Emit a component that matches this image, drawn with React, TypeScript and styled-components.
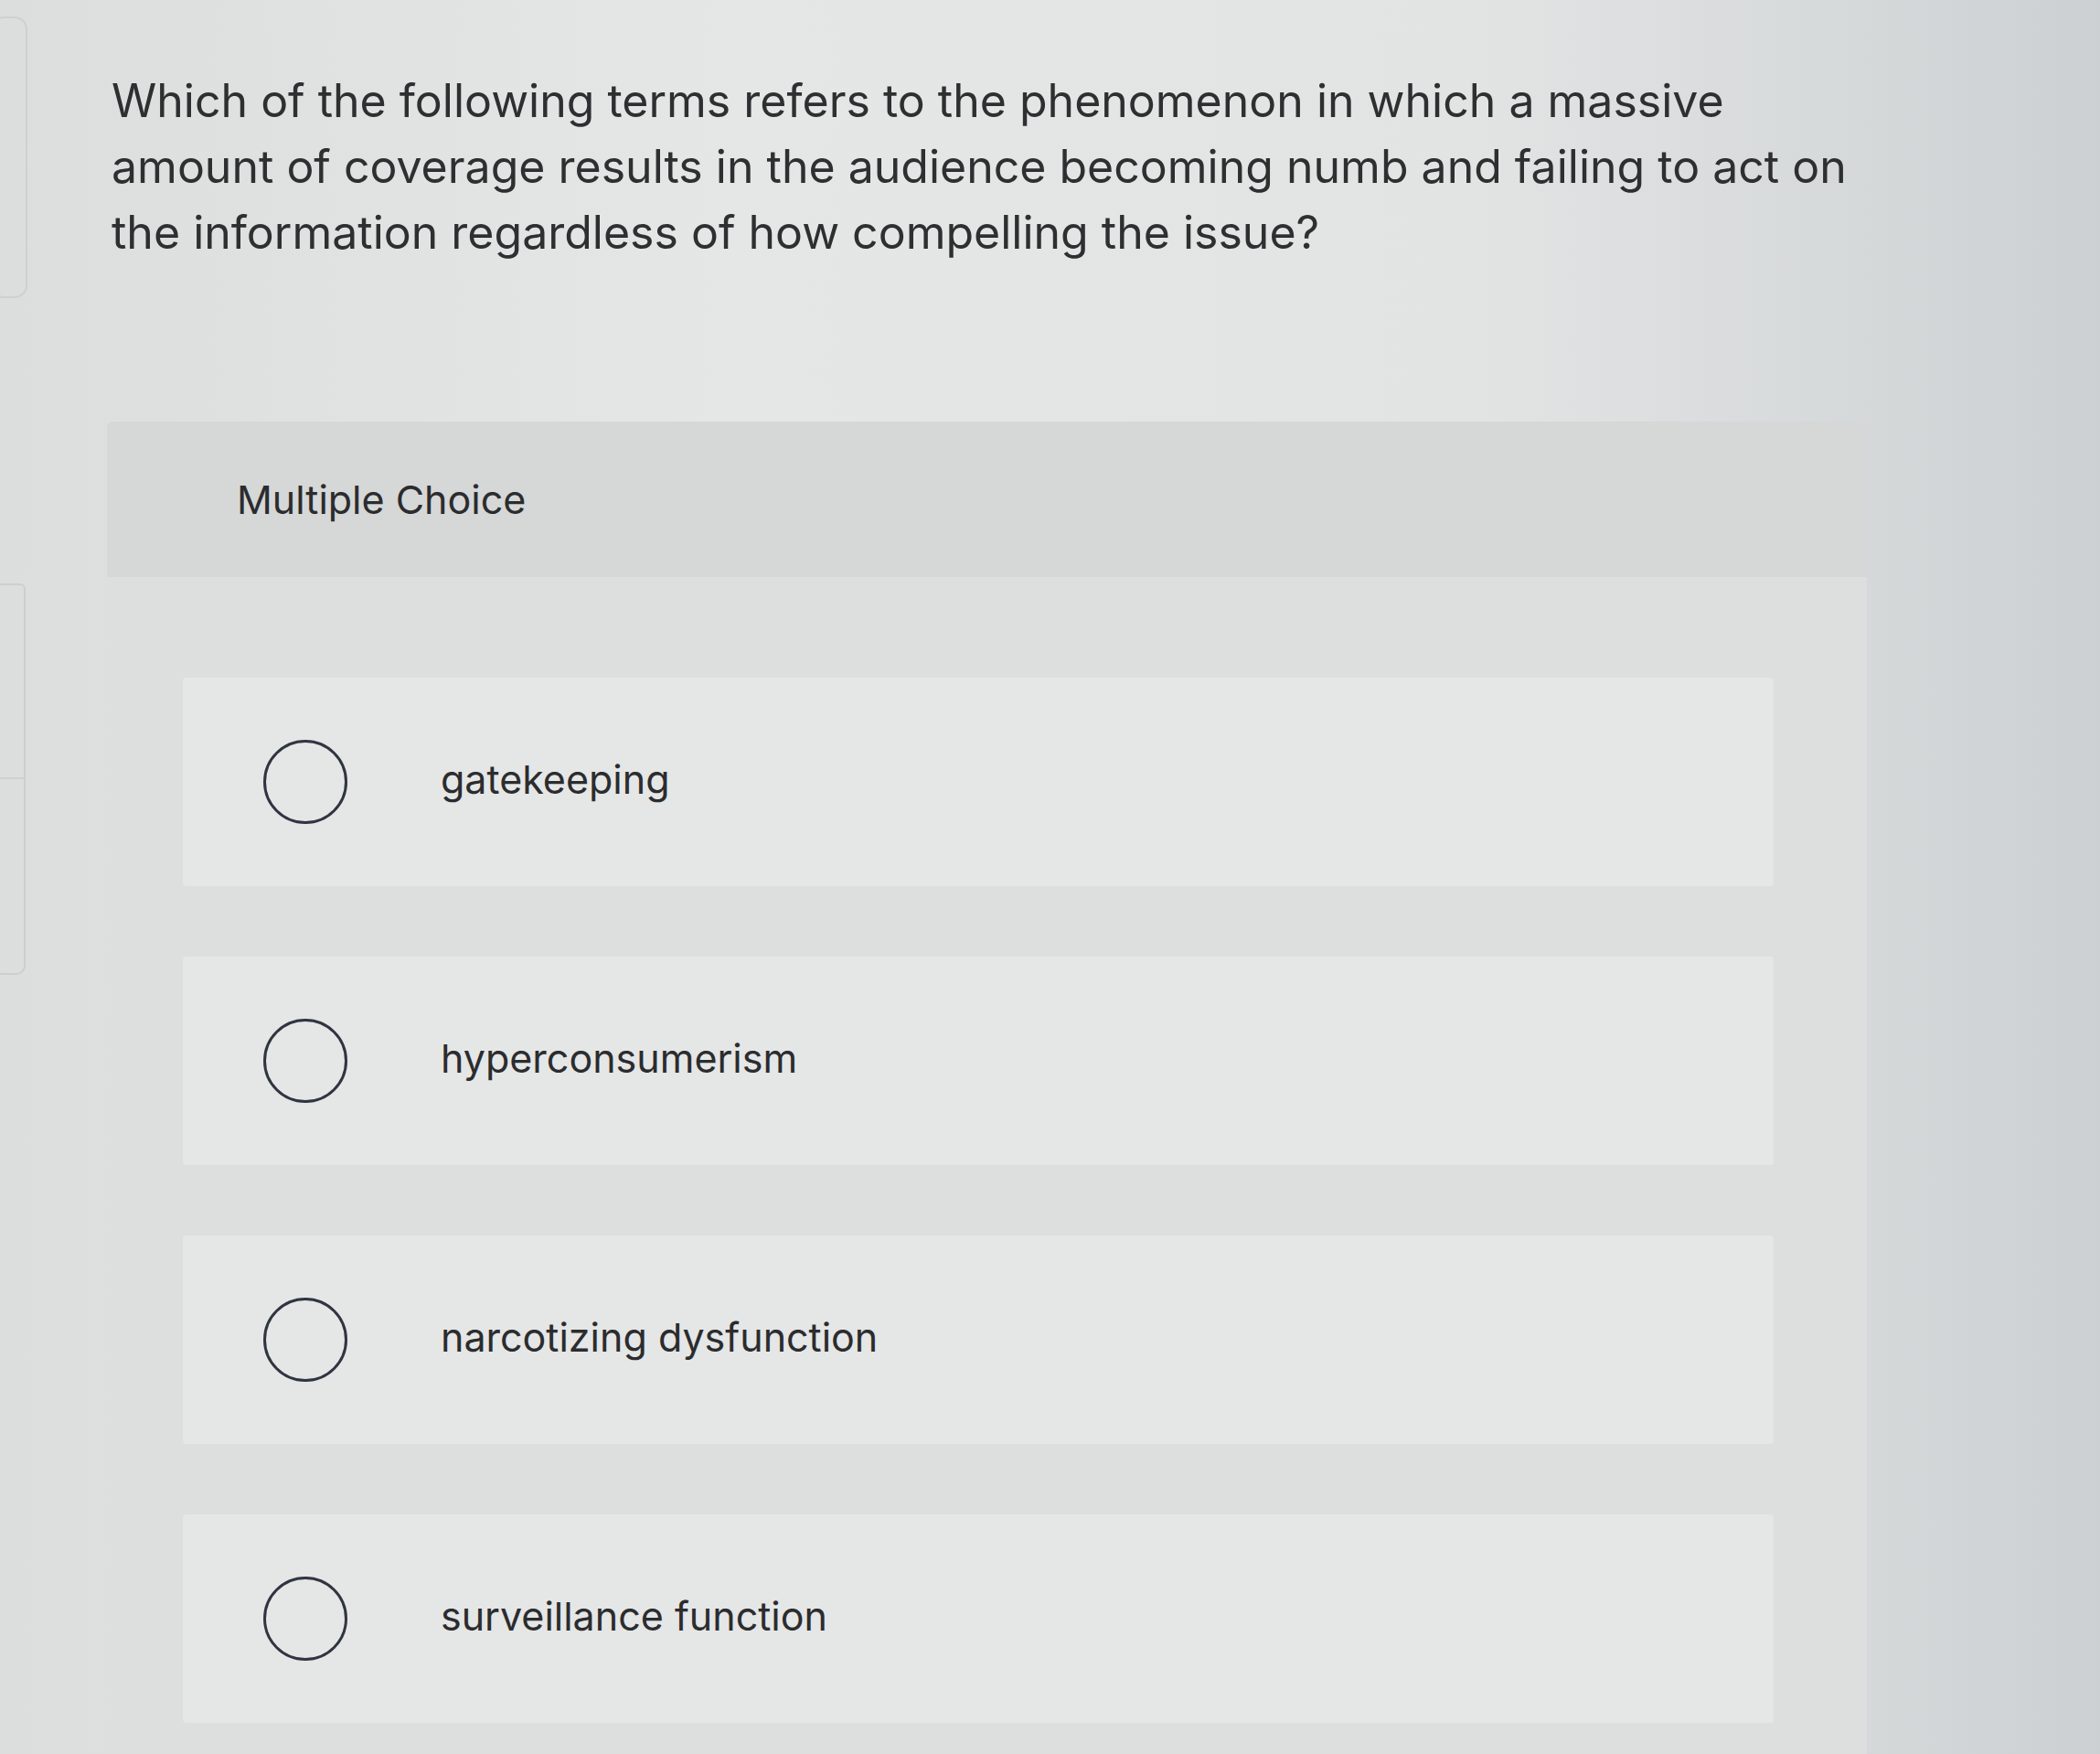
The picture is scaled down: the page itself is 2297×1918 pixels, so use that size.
import styled, { createGlobalStyle } from "styled-components";

const GlobalStyle = createGlobalStyle`
  html, body {
    margin: 0;
    padding: 0;
  }
  body {
    font-family: Inter, "Liberation Sans", sans-serif;
    background: linear-gradient(90deg, #dcdddd 0%, #e5e6e6 35%, #e2e4e4 70%, #d6d9da 88%, #ccd0d2 100%);
    color: #2b2c2e;
    overflow: hidden;
  }
`;

const options = [
  "gatekeeping",
  "hyperconsumerism",
  "narcotizing dysfunction",
  "surveillance function",
];

const App = () => {
  return (
    <>
      <GlobalStyle />
      <Page>
        <Rail>
          <RailCard />
          <RailPanel>
            <RailSection $height={210} />
            <RailSection $height={212} />
          </RailPanel>
        </Rail>
        <Main>
          <Question>
            Which of the following terms refers to the phenomenon in which a
            massive amount of coverage results in the audience becoming numb
            and failing to act on the information regardless of how compelling
            the issue?
          </Question>
          <Panel>
            <PanelHeader>Multiple Choice</PanelHeader>
            <OptionList>
              {options.map((label) => (
                <Option key={label}>
                  <Radio />
                  <OptionText>{label}</OptionText>
                </Option>
              ))}
            </OptionList>
          </Panel>
        </Main>
      </Page>
    </>
  );
};

const Page = styled.div`
  display: flex;
  width: 2297px;
  height: 1918px;
  overflow: hidden;
`;

const Rail = styled.div`
  width: 32px;
  flex-shrink: 0;
  overflow: hidden;
  display: flex;
  flex-direction: column;
  padding-top: 18px;
  gap: 312px;
`;

const RailCard = styled.div`
  width: 40px;
  height: 308px;
  margin-left: -10px;
  border: 2px solid #cfd0d0;
  border-radius: 14px;
  box-sizing: border-box;
`;

const RailPanel = styled.div`
  width: 34px;
  margin-left: -10px;
  border: 2px solid #cdcece;
  border-radius: 0 6px 10px 0;
  display: flex;
  flex-direction: column;
`;

const RailSection = styled.div<{ $height: number }>`
  height: ${(p) => p.$height}px;
  & + & {
    border-top: 2px solid #cfd0d0;
  }
`;

const Main = styled.div`
  margin-left: 85px;
  display: flex;
  flex-direction: column;
`;

const Question = styled.p`
  margin: 0;
  padding: 74px 0 0 5px;
  width: 1925px;
  font-size: 50px;
  line-height: 72px;
  color: #2e2f31;
`;

const Panel = styled.section`
  margin-top: 171px;
  width: 1925px;
  background: #dddede;
  border-radius: 6px 6px 0 0;
  display: flex;
  flex-direction: column;
  padding-bottom: 80px;
`;

const PanelHeader = styled.div`
  height: 170px;
  display: flex;
  align-items: center;
  padding-left: 142px;
  background: #d6d7d7;
  border-radius: 6px 6px 0 0;
  font-size: 43px;
  color: #2b2c2e;
`;

const OptionList = styled.div`
  display: flex;
  flex-direction: column;
  gap: 77px;
  padding: 110px 102px 0 83px;
`;

const Option = styled.label`
  height: 228px;
  display: flex;
  align-items: center;
  padding-left: 88px;
  background: #e5e6e6;
  border-radius: 4px;
  cursor: pointer;
`;

const Radio = styled.span`
  width: 92px;
  height: 92px;
  flex-shrink: 0;
  box-sizing: border-box;
  border: 3px solid #2f3540;
  border-radius: 50%;
`;

const OptionText = styled.span`
  margin-left: 102px;
  margin-top: -6px;
  font-size: 43px;
  color: #2b2c2e;
`;

export default App;
